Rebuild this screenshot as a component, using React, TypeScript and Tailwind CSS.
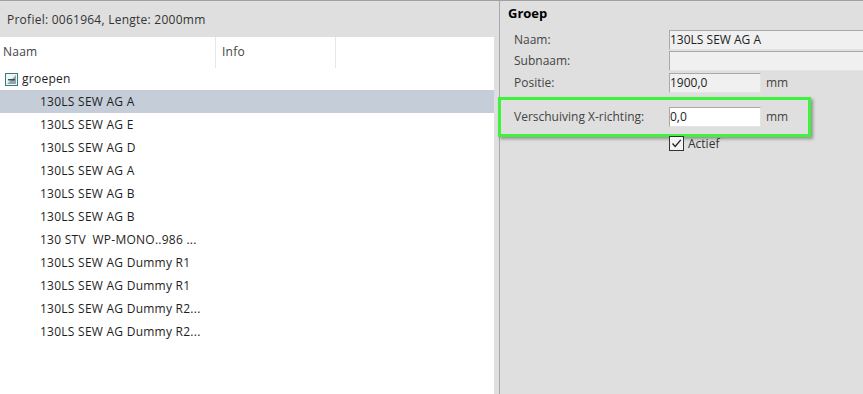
import React from 'react';

const items = [
  '130LS SEW AG A',
  '130LS SEW AG E',
  '130LS SEW AG D',
  '130LS SEW AG A',
  '130LS SEW AG B',
  '130LS SEW AG B',
  '130 STV  WP-MONO..986 ...',
  '130LS SEW AG Dummy R1',
  '130LS SEW AG Dummy R1',
  '130LS SEW AG Dummy R2...',
  '130LS SEW AG Dummy R2...',
];

const font = { fontFamily: '"Open Sans", "Noto Sans", sans-serif' };

const CollapseIcon = () => (
  <svg width="13" height="13" viewBox="0 0 13 13" className="shrink-0">
    <rect x="0.5" y="0.5" width="12" height="12" fill="#f4f4f4" stroke="#2f7f86" />
    <path d="M11 2 L11 11 L2 11 Z" fill="#9aa3a8" />
    <rect x="3" y="6" width="7" height="1.5" fill="#1d5e66" />
  </svg>
);

const ReadOnlyBox: React.FC<{ value?: string; className?: string }> = ({ value, className }) => (
  <div
    className={`h-[20px] border border-[#a9a9a9] border-b-[#e3e3e3] border-r-[#e3e3e3] bg-[#f0f0f0] text-[12px] leading-[18px] text-[#222] ${className ?? ''}`}
  >
    {value}
  </div>
);

export default function App() {
  return (
    <div
      className="flex h-[394px] w-[863px] overflow-hidden border-t border-[#a0a0a0] bg-[#dfdfdf] text-[12px] text-[#1e1e1e]"
      style={font}
    >
      {/* left panel */}
      <div className="flex w-[500px] shrink-0 flex-col border-r border-[#a8a8a8] tracking-[0.25px]">
        <div className="flex h-[36px] items-center pl-[7px] pt-[1px] text-[#333]">
          Profiel: 0061964, Lengte: 2000mm
        </div>
        <div className="flex-1 w-[494px] bg-white">
          <div className="flex h-[31px] items-start text-[#444]">
            <div className="h-[31px] w-[216px] border-r border-[#e6e6e6] pl-[3px] pt-[6px]">Naam</div>
            <div className="h-[31px] w-[120px] border-r border-[#e6e6e6] pl-[6px] pt-[6px]">Info</div>
          </div>
          <div className="flex h-[22px] items-center gap-[4px] pl-[5px]">
            <CollapseIcon />
            <span>groepen</span>
          </div>
          {items.map((name, i) => (
            <div
              key={i}
              className={`flex h-[23px] items-center whitespace-pre pl-[40px] ${i === 0 ? 'bg-[#c5cdd8]' : ''}`}
            >
              {name}
            </div>
          ))}
        </div>
      </div>

      {/* right panel */}
      <div className="flex flex-1 flex-col pl-[8px] pt-[3px]">
        <div className="text-[13px] font-bold text-black">Groep</div>
        <div className="mt-[6px] flex flex-col pl-[6px] text-[#444]">
          <div className="flex h-[20px] items-center">
            <span className="w-[155px]">Naam:</span>
            <ReadOnlyBox value="130LS SEW AG A" className="w-[200px]" />
          </div>
          <div className="mt-[1px] flex h-[20px] items-center">
            <span className="w-[155px]">Subnaam:</span>
            <ReadOnlyBox className="w-[200px]" />
          </div>
          <div className="mt-[2px] flex h-[20px] items-center">
            <span className="w-[155px]">Positie:</span>
            <ReadOnlyBox value="1900,0" className="w-[92px]" />
            <span className="ml-[5px]">mm</span>
          </div>
        </div>
        <div className="-ml-[10px] mt-[4px] flex h-[40px] w-[313px] items-center border-[3px] border-[#3ef23e] pl-[13px] text-[#444] shadow-[2px_2px_3px_rgba(0,0,0,0.35)]">
          <span className="w-[155px]">Verschuiving X-richting:</span>
          <div className="h-[20px] w-[92px] border border-[#a9a9a9] border-b-[#e3e3e3] border-r-[#e3e3e3] bg-white leading-[18px] text-[#222]">
            0,0
          </div>
          <span className="ml-[5px]">mm</span>
        </div>
        <div className="ml-[161px] -mt-[2px] flex items-center gap-[4px] text-[#333]">
          <div className="flex h-[15px] w-[15px] items-center justify-center border border-[#333] bg-[#f4f4f4]">
            <svg width="11" height="11" viewBox="0 0 11 11">
              <path d="M1.5 5.5 L4.2 8.5 L9.8 1.8" fill="none" stroke="#222" strokeWidth="1.3" />
            </svg>
          </div>
          <span>Actief</span>
        </div>
      </div>
    </div>
  );
}
